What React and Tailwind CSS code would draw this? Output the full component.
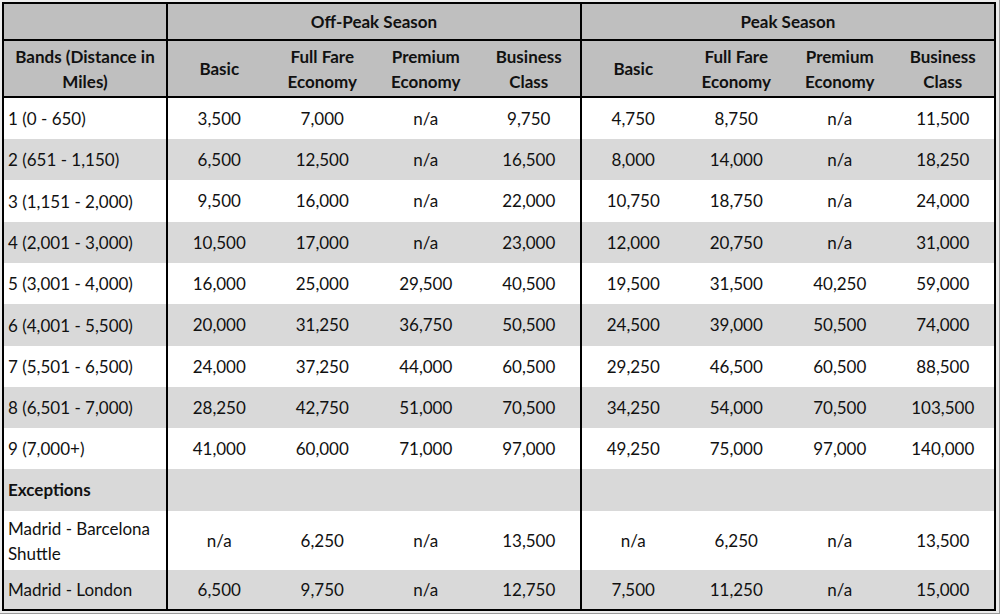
const bands = [
  { band: "1 (0 - 650)", off: ["3,500", "7,000", "n/a", "9,750"], peak: ["4,750", "8,750", "n/a", "11,500"], h: "h-[42px]" },
  { band: "2 (651 - 1,150)", off: ["6,500", "12,500", "n/a", "16,500"], peak: ["8,000", "14,000", "n/a", "18,250"], h: "h-[41px]" },
  { band: "3 (1,151 - 2,000)", off: ["9,500", "16,000", "n/a", "22,000"], peak: ["10,750", "18,750", "n/a", "24,000"], h: "h-[42px]" },
  { band: "4 (2,001 - 3,000)", off: ["10,500", "17,000", "n/a", "23,000"], peak: ["12,000", "20,750", "n/a", "31,000"], h: "h-[41px]" },
  { band: "5 (3,001 - 4,000)", off: ["16,000", "25,000", "29,500", "40,500"], peak: ["19,500", "31,500", "40,250", "59,000"], h: "h-[41px]" },
  { band: "6 (4,001 - 5,500)", off: ["20,000", "31,250", "36,750", "50,500"], peak: ["24,500", "39,000", "50,500", "74,000"], h: "h-[42px]" },
  { band: "7 (5,501 - 6,500)", off: ["24,000", "37,250", "44,000", "60,500"], peak: ["29,250", "46,500", "60,500", "88,500"], h: "h-[41px]" },
  { band: "8 (6,501 - 7,000)", off: ["28,250", "42,750", "51,000", "70,500"], peak: ["34,250", "54,000", "70,500", "103,500"], h: "h-[41px]" },
  { band: "9 (7,000+)", off: ["41,000", "60,000", "71,000", "97,000"], peak: ["49,250", "75,000", "97,000", "140,000"], h: "h-[41px]" },
];

const exceptions = [
  { band: "Madrid - Barcelona Shuttle", off: ["n/a", "6,250", "n/a", "13,500"], peak: ["n/a", "6,250", "n/a", "13,500"], h: "h-[59px]" },
  { band: "Madrid - London", off: ["6,500", "9,750", "n/a", "12,750"], peak: ["7,500", "11,250", "n/a", "15,000"], h: "h-[40px]" },
];

const classes = [
  ["Basic"],
  ["Full Fare", "Economy"],
  ["Premium", "Economy"],
  ["Business", "Class"],
];

function DataRow({ row, shaded }) {
  const bg = shaded ? "bg-[#d9d9d9]" : "bg-white";
  return (
    <tr className={`${bg} ${row.h}`}>
      <td className="border-r-2 border-black pl-[4px] pr-1 text-left leading-[25px]">{row.band}</td>
      {row.off.map((v, i) => (
        <td key={"o" + i} className={`text-center ${i === 3 ? "border-r-2 border-black" : ""}`}>
          {v}
        </td>
      ))}
      {row.peak.map((v, i) => (
        <td key={"p" + i} className="text-center">
          {v}
        </td>
      ))}
    </tr>
  );
}

export default function App() {
  return (
    <div className="w-[1000px] h-[614px] bg-[#ececec] pt-[2px] pl-[2px] pr-[3px] pb-[2px] border-r border-b border-[#9a9a9a]">
      <table
        className="w-full table-fixed border-collapse border-2 border-black text-[17px] text-[#111]"
        style={{ fontFamily: "Lato, 'Noto Sans', sans-serif" }}
      >
        <colgroup>
          <col className="w-[164px]" />
          <col />
          <col />
          <col />
          <col />
          <col />
          <col />
          <col />
          <col />
        </colgroup>
        <thead>
          <tr className="h-[37px] bg-[#bfbfbf]">
            <th className="border-r-2 border-b-2 border-black"></th>
            <th colSpan={4} className="border-r-2 border-b-2 border-black font-bold text-center">
              Off-Peak Season
            </th>
            <th colSpan={4} className="border-b-2 border-black font-bold text-center">
              Peak Season
            </th>
          </tr>
          <tr className="h-[57px] bg-[#bfbfbf] leading-[25px]">
            <th className="border-r-2 border-b-2 border-black font-bold text-center px-0">
              Bands (Distance in Miles)
            </th>
            {classes.map((c, i) => (
              <th key={"oh" + i} className={`border-b-2 border-black font-bold text-center ${i === 3 ? "border-r-2" : ""}`}>
                {c.map((l) => (
                  <div key={l}>{l}</div>
                ))}
              </th>
            ))}
            {classes.map((c, i) => (
              <th key={"ph" + i} className="border-b-2 border-black font-bold text-center">
                {c.map((l) => (
                  <div key={l}>{l}</div>
                ))}
              </th>
            ))}
          </tr>
        </thead>
        <tbody>
          {bands.map((row, i) => (
            <DataRow key={row.band} row={row} shaded={i % 2 === 1} />
          ))}
          <tr className="bg-[#d9d9d9] h-[42px]">
            <td className="border-r-2 border-black pl-[4px] font-bold text-left">Exceptions</td>
            <td></td>
            <td></td>
            <td></td>
            <td className="border-r-2 border-black"></td>
            <td></td>
            <td></td>
            <td></td>
            <td></td>
          </tr>
          {exceptions.map((row, i) => (
            <DataRow key={row.band} row={row} shaded={i % 2 === 1} />
          ))}
        </tbody>
      </table>
    </div>
  );
}
